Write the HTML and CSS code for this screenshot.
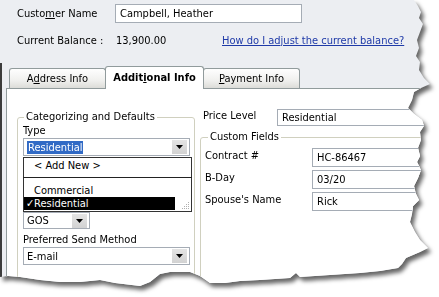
FILE: index.html
```html
<!DOCTYPE html>
<html>
<head>
<meta charset="utf-8">
<link rel="stylesheet" href="styles.css">
</head>
<body>
<div class="frame">
  <div class="window">
    <div class="header">
      <div class="row1">
        <span class="lbl-name">Custo<u>m</u>er Name</span>
        <div class="tbox name-box">Campbell, Heather</div>
      </div>
      <div class="row2">
        <span class="lbl-bal">Current Balance :</span>
        <span class="bal-val">13,900.00</span>
        <a class="help-link">How do I adjust the current balance?</a>
      </div>
    </div>
    <div class="lower">
      <div class="tabs">
        <div class="tab">A<u>d</u>dress Info</div>
        <div class="tab active">Addit<u>i</u>onal Info</div>
        <div class="tab"><u>P</u>ayment Info</div>
      </div>
      <div class="panel">
        <fieldset class="group cat">
          <legend>Categorizing and Defaults</legend>
          <div class="flabel">Type</div>
          <div class="combo wide">
            <span class="ctext"><span class="sel">Residential</span></span>
            <span class="arrow"><svg width="7" height="4" viewBox="0 0 7 4"><path d="M0 0H7L3.5 4Z" fill="#000"/></svg></span>
          </div>
          <div class="list">
            <div class="item addnew">&lt; Add New &gt;</div>
            <div class="sep"></div>
            <div class="item comm">Commercial</div>
            <div class="item hl"><span class="check">✓</span>Residential</div>
            <svg class="grip" width="8" height="8" viewBox="0 0 8 8">
              <rect x="6" y="0" width="1" height="1" fill="#b0b0b0"/>
              <rect x="4" y="2" width="1" height="1" fill="#b0b0b0"/>
              <rect x="6" y="2" width="1" height="1" fill="#b0b0b0"/>
              <rect x="2" y="4" width="1" height="1" fill="#b0b0b0"/>
              <rect x="4" y="4" width="1" height="1" fill="#b0b0b0"/>
              <rect x="6" y="4" width="1" height="1" fill="#b0b0b0"/>
              <rect x="0" y="6" width="1" height="1" fill="#b0b0b0"/>
              <rect x="2" y="6" width="1" height="1" fill="#b0b0b0"/>
              <rect x="4" y="6" width="1" height="1" fill="#b0b0b0"/>
              <rect x="6" y="6" width="1" height="1" fill="#b0b0b0"/>
            </svg>
          </div>
          <div class="combo small">
            <span class="ctext">GOS</span>
            <span class="arrow"><svg width="7" height="4" viewBox="0 0 7 4"><path d="M0 0H7L3.5 4Z" fill="#000"/></svg></span>
          </div>
          <div class="flabel send">Preferred Send Method</div>
          <div class="combo wide email">
            <span class="ctext">E-mail</span>
            <span class="arrow"><svg width="7" height="4" viewBox="0 0 7 4"><path d="M0 0H7L3.5 4Z" fill="#000"/></svg></span>
          </div>
        </fieldset>
        <div class="right">
          <div class="price-row">
            <span class="lbl-price">Price Level</span>
            <div class="tbox price-box">Residential</div>
          </div>
          <fieldset class="group custom">
            <legend>Custom Fields</legend>
            <div class="crow"><span class="clbl">Contract #</span><div class="tbox cbox">HC-86467</div></div>
            <div class="crow"><span class="clbl">B-Day</span><div class="tbox cbox">03/20</div></div>
            <div class="crow"><span class="clbl">Spouse's Name</span><div class="tbox cbox">Rick</div></div>
          </fieldset>
        </div>
      </div>
    </div>
  </div>
</div>
</body>
</html>
```

FILE: styles.css
```css
html, body {
  margin: 0;
  padding: 0;
  background: #ffffff;
}
body {
  font-family: "DejaVu Sans Condensed", "DejaVu Sans", sans-serif;
  font-stretch: condensed;
  font-size: 11px;
  color: #000;
  overflow: hidden;
}
.frame {
  width: 439px;
  height: 297px;
  filter: drop-shadow(3px 4px 2px rgba(0,0,0,0.6));
}
.window {
  width: 439px;
  height: 297px;
  background: #eceef2;
  display: flex;
  flex-direction: column;
  overflow: hidden;
  clip-path: polygon(0 0, 414px 0, 418px 6px, 421px 12px, 419px 18px, 423px 24px, 420px 32px, 417px 40px, 419px 48px, 416px 56px, 420px 62px, 419px 70px, 424px 78px, 430px 84px, 421px 88px, 414px 92px, 412px 100px, 408px 108px, 414px 114px, 422px 120px, 424px 126px, 420px 132px, 421px 140px, 418px 148px, 420px 156px, 417px 162px, 421px 170px, 418px 178px, 414px 186px, 416px 194px, 419px 200px, 413px 206px, 412px 214px, 410px 222px, 415px 232px, 420px 240px, 428px 248px, 420px 252px, 406px 258px, 402px 264px, 398px 268px, 380px 271px, 360px 273px, 330px 275px, 300px 277px, 296px 273px, 290px 278px, 260px 280px, 240px 281px, 225px 283px, 210px 283px, 200px 276px, 190px 272px, 170px 272px, 160px 274px, 150px 282px, 140px 286px, 115px 283px, 100px 280px, 80px 282px, 60px 282px, 40px 280px, 20px 277px, 8px 276px, 0 277px);
}
.header {
  padding: 4px 0 0 17px;
  height: 63px;
  box-sizing: border-box;
  flex: none;
}
.row1 {
  display: flex;
  align-items: center;
  height: 18px;
}
.lbl-name {
  width: 98px;
}
.tbox {
  background: #fff;
  border: 1px solid #a5acb5;
  box-sizing: border-box;
  padding-left: 4px;
  display: flex;
  align-items: center;
  white-space: nowrap;
}
.name-box {
  width: 187px;
  height: 19px;
}
.row2 {
  display: flex;
  align-items: center;
  margin-top: 10px;
  height: 16px;
}
.lbl-bal {
  width: 99px;
}
.bal-val {
  width: 106px;
}
.help-link {
  color: #1f3aa8;
  text-decoration: underline;
}
.lower {
  flex: 1;
  display: flex;
  flex-direction: column;
  border-left: 2px solid #3c3c3c;
  min-height: 0;
}
.tabs {
  display: flex;
  align-items: flex-end;
  padding-left: 7px;
  height: 25px;
  flex: none;
  position: relative;
  z-index: 1;
}
.tab {
  width: 97px;
  height: 20px;
  box-sizing: border-box;
  border: 1px solid #919b9c;
  border-bottom: none;
  border-radius: 3px 3px 0 0;
  background: linear-gradient(#fefefe, #f0f0ee 60%, #dcdcd8);
  text-align: center;
  line-height: 19px;
}
.tab.active {
  width: 99px;
  height: 23px;
  margin: 0 -1px -1px;
  background: #fff;
  font-weight: bold;
  line-height: 21px;
  position: relative;
}
.panel {
  flex: 1;
  min-height: 0;
  margin-left: 4px;
  background: #fff;
  border: 1px solid #919b9c;
  display: flex;
  align-items: flex-start;
  overflow: hidden;
}
.group {
  border: 1px solid #d0d0bf;
  border-radius: 3px;
  margin: 0;
  min-width: 0;
}
.group legend {
  padding: 0 2px;
  line-height: 14px;
}
.cat {
  margin: 21px 0 0 10px;
  width: 178px;
  height: 200px;
  box-sizing: border-box;
  padding: 0 4px 0 5px;
}
.cat legend {
  margin-left: 1px;
}
.flabel {
  line-height: 14px;
}
.combo {
  display: flex;
  align-items: center;
  background: #fff;
  border: 1px solid #a5acb5;
  box-sizing: border-box;
  height: 18px;
}
.combo.wide {
  width: 167px;
}
.combo.small {
  width: 67px;
  height: 17px;
}
.ctext {
  flex: 1;
  padding-left: 3px;
  white-space: nowrap;
}
.sel {
  background: #316ac5;
  color: #fff;
  padding: 0 1px;
}
.arrow {
  width: 15px;
  height: 14px;
  margin-right: 2px;
  background: linear-gradient(#e4e4e4, #d2d2d2);
  display: flex;
  align-items: center;
  justify-content: center;
}
.list {
  position: relative;
  width: 169px;
  height: 55px;
  box-sizing: border-box;
  border: 1px solid #333;
  margin-top: 1px;
  background: #fff;
}
.item {
  white-space: nowrap;
}
.addnew {
  height: 16px;
  line-height: 16px;
  padding-left: 10px;
}
.sep {
  height: 1px;
  background: #222;
  margin: 3px -1px 7px;
}
.comm {
  height: 12px;
  line-height: 12px;
  padding-left: 10px;
}
.hl {
  width: 151px;
  height: 13px;
  line-height: 13px;
  background: #000;
  color: #fff;
  padding-left: 2px;
  box-sizing: border-box;
}
.check {
  display: inline-block;
  width: 8px;
}
.grip {
  position: absolute;
  right: 1px;
  bottom: 1px;
}
.send {
  margin-top: 4px;
}
.right {
  flex: 1;
  margin-left: 5px;
  padding-top: 20px;
  display: flex;
  flex-direction: column;
}
.price-row {
  display: flex;
  align-items: flex-start;
}
.lbl-price {
  width: 74px;
  padding-left: 3px;
  line-height: 13px;
}
.price-box {
  flex: 1;
  height: 17px;
}
.custom {
  margin: 4px 0 0 0;
  padding: 0 0 0 4px;
  height: 180px;
}
.custom legend {
  margin-left: 3px;
}
.crow {
  display: flex;
  align-items: flex-start;
  height: 22px;
}
.crow:first-of-type {
  margin-top: 4px;
}
.clbl {
  width: 107px;
  line-height: 15px;
}
.cbox {
  flex: 1;
  height: 19px;
}
```
